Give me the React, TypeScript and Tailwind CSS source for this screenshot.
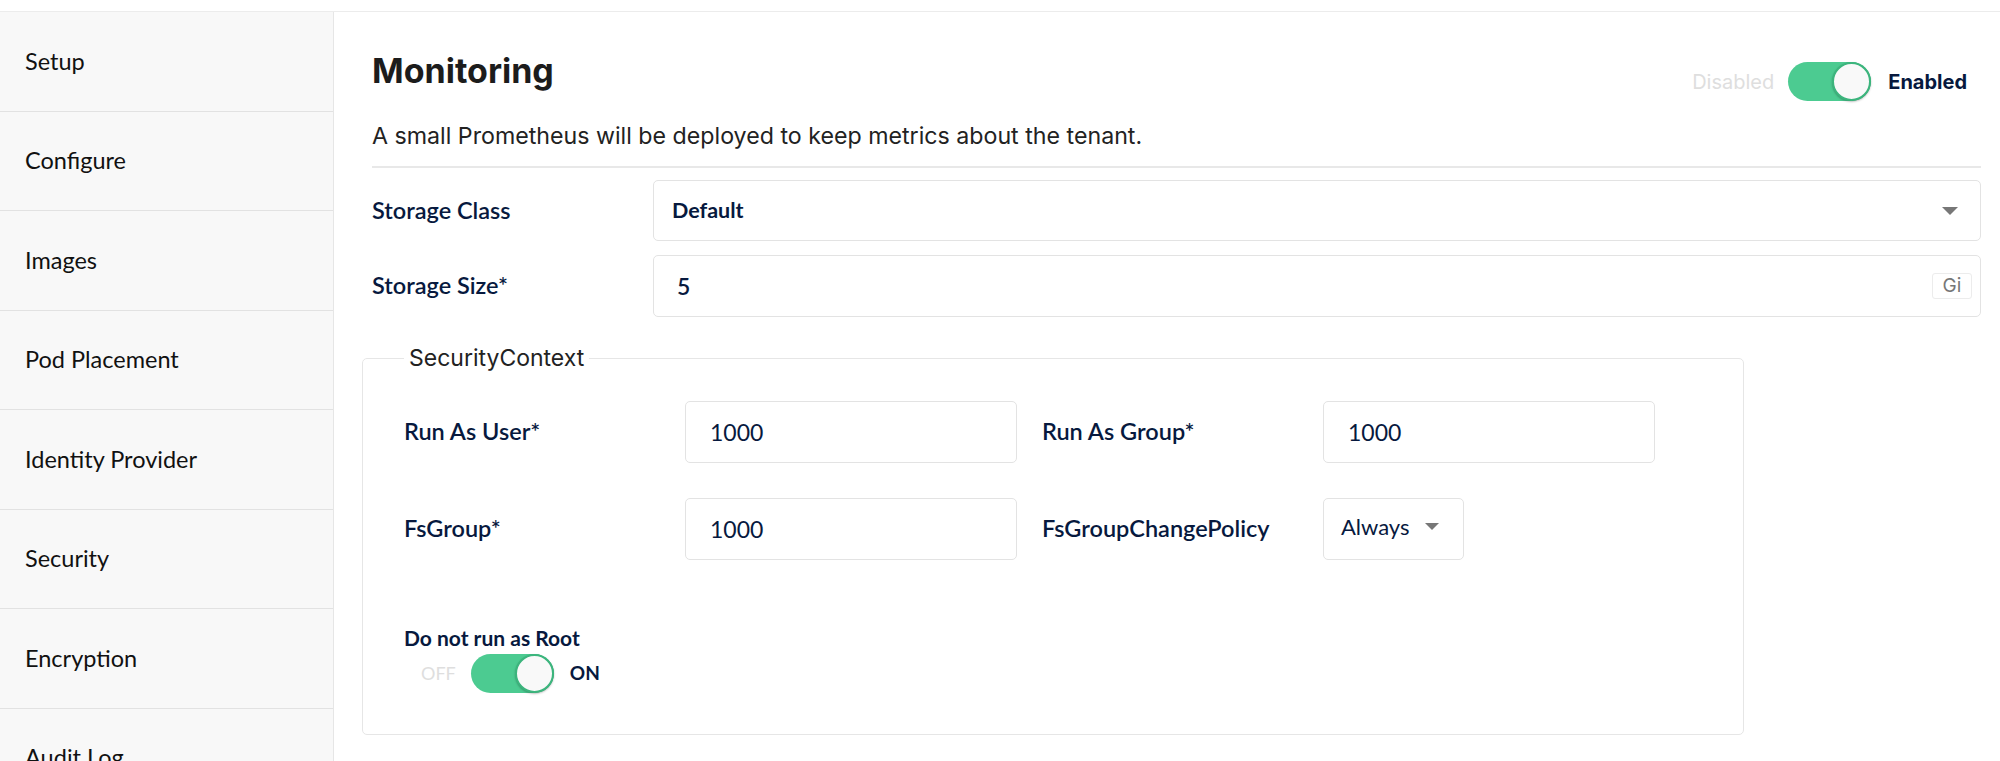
import { useState } from 'react';

const menu = [
  'Setup',
  'Configure',
  'Images',
  'Pod Placement',
  'Identity Provider',
  'Security',
  'Encryption',
  'Audit Log',
];

function Toggle({ on }: { on: boolean }) {
  return (
    <div
      className={
        on
          ? 'w-[83px] h-[39px] rounded-full bg-[#4ccb91] flex items-center justify-end'
          : 'w-[83px] h-[39px] rounded-full bg-[#e2e2e2] flex items-center justify-start'
      }
    >
      <div className="w-[39px] h-[39px] rounded-full bg-[#f9f9f9] border-2 border-[#3cb57d] shadow-[0_1px_2px_rgba(0,0,0,0.25)]" />
    </div>
  );
}

function Caret({ small }: { small?: boolean }) {
  return (
    <span
      className={
        small
          ? 'w-0 h-0 border-l-[7px] border-r-[7px] border-t-[7px] border-l-transparent border-r-transparent border-t-[#777]'
          : 'w-0 h-0 border-l-[8px] border-r-[8px] border-t-[8px] border-l-transparent border-r-transparent border-t-[#777]'
      }
    />
  );
}

function Field({ label, value }: { label: string; value: string }) {
  return (
    <div className="flex items-center">
      <label className="w-[281px] shrink-0 text-[23.5px] font-semibold text-[#07193e]">
        {label}
      </label>
      <div className="w-[332px] h-[62px] border border-[#e3e3e3] rounded-[5px] flex items-center pl-[24px] text-[23px] text-[#07193e]">
        {value}
      </div>
    </div>
  );
}

export default function App() {
  const [active] = useState('Monitoring');

  return (
    <div className="w-[2000px] h-[761px] overflow-hidden bg-white font-[Lato,sans-serif]">
      <div className="h-[12px] border-b border-[#ececec]" />
      <div className="flex">
        <aside className="w-[334px] shrink-0 bg-[#f8f8f8] border-r border-[#e6e6e6]">
          {menu.map((item) => (
            <div
              key={item}
              className="h-[99.5px] border-b border-[#e2e2e2] flex items-center pl-[25px] text-[23.5px] text-[#111]"
            >
              {item}
            </div>
          ))}
        </aside>

        <main className="flex-1 pl-[38px] pr-[19px] pt-[39px]">
          <div className="flex justify-between items-start">
            <h1 className="font-[Inter,sans-serif] text-[34px] leading-[40px] font-bold text-[#1c1c1c]">
              {active}
            </h1>
            <div className="flex items-center mt-[11px] mr-[14px] font-[Inter,sans-serif] text-[20px]">
              <span className="text-[#dedede]">Disabled</span>
              <div className="ml-[14px] mr-[17px]">
                <Toggle on />
              </div>
              <span className="font-bold text-[#07193e]">Enabled</span>
            </div>
          </div>

          <p className="mt-[21px] font-[Inter,sans-serif] text-[23.2px] leading-[28px] text-[#222]">
            A small Prometheus will be deployed to keep metrics about the tenant.
          </p>
          <div className="mt-[16px] border-t-2 border-[#e8e8e8]" />

          <div className="mt-[12px] flex flex-col gap-[14px]">
            <div className="flex items-center">
              <label className="w-[281px] shrink-0 text-[23.5px] font-semibold text-[#07193e]">
                Storage Class
              </label>
              <div className="flex-1 h-[61px] border border-[#e3e3e3] rounded-[5px] flex items-center justify-between pl-[18px] pr-[22px]">
                <span className="text-[21.5px] font-bold text-[#07193e]">Default</span>
                <Caret />
              </div>
            </div>
            <div className="flex items-center">
              <label className="w-[281px] shrink-0 text-[23.5px] font-semibold text-[#07193e]">
                Storage Size*
              </label>
              <div className="flex-1 h-[62px] border border-[#e3e3e3] rounded-[5px] flex items-center justify-between pl-[23px] pr-[8px]">
                <span className="text-[23px] font-semibold text-[#07193e]">5</span>
                <span className="w-[40px] h-[26px] border border-[#ececec] rounded-[3px] flex items-center justify-center font-[Inter,sans-serif] text-[19px] text-[#777]">
                  Gi
                </span>
              </div>
            </div>
          </div>

          <fieldset className="mt-[29px] -ml-[10px] w-[1382px] border border-[#e6e6e6] rounded-[5px] pl-[41px] pt-[31px] pb-[41px]">
            <legend className="px-[5px] font-[Inter,sans-serif] text-[23px] leading-[24px] text-[#222]">
              SecurityContext
            </legend>
            <div className="grid grid-cols-[613px_613px] gap-x-[25px] gap-y-[35px]">
              <Field label="Run As User*" value="1000" />
              <Field label="Run As Group*" value="1000" />
              <Field label="FsGroup*" value="1000" />
              <div className="flex items-center">
                <label className="w-[281px] shrink-0 text-[23.5px] font-semibold text-[#07193e]">
                  FsGroupChangePolicy
                </label>
                <div className="w-[141px] h-[62px] border border-[#e3e3e3] rounded-[5px] flex items-center justify-between pl-[17px] pr-[24px] pb-[5px]">
                  <span className="text-[22px] text-[#07193e]">Always</span>
                  <Caret small />
                </div>
              </div>
            </div>

            <div className="mt-[66px] text-[21px] leading-[24px] font-bold text-[#07193e]">
              Do not run as Root
            </div>
            <div className="mt-[4px] flex items-center">
              <span className="ml-[17px] mr-[15px] text-[18px] text-[#dedede]">OFF</span>
              <Toggle on />
              <span className="ml-[16px] text-[19px] font-bold text-[#07193e]">ON</span>
            </div>
          </fieldset>
        </main>
      </div>
    </div>
  );
}
